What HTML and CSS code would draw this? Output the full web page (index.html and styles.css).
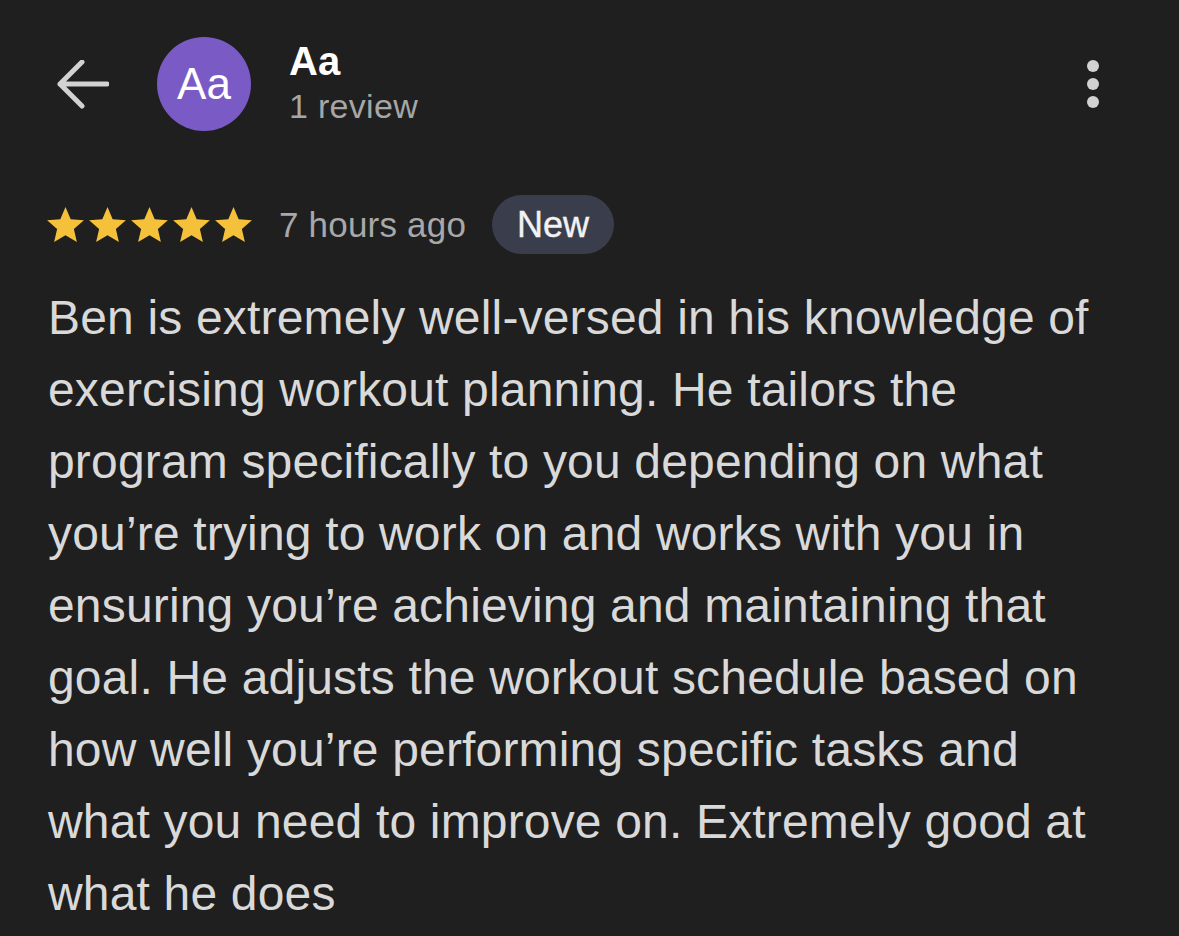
FILE: index.html
```html
<!DOCTYPE html>
<html lang="en">
<head>
<meta charset="utf-8">
<title>Review</title>
<link rel="stylesheet" href="styles.css">
</head>
<body>
<div class="page">
  <header class="header">
    <div class="back">
      <svg width="52" height="50" viewBox="0 0 52 50"><path d="M3 24 H50 M25 2 L3 24 L25 46" fill="none" stroke="#d2d2d2" stroke-width="5" stroke-linecap="round" stroke-linejoin="round"/></svg>
    </div>
    <div class="avatar">Aa</div>
    <div class="who">
      <div class="name">Aa</div>
      <div class="count">1 review</div>
    </div>
    <div class="menu">
      <svg width="14" height="50" viewBox="0 0 14 50"><circle cx="7" cy="7" r="6" fill="#d2d2d2"/><circle cx="7" cy="25" r="6" fill="#d2d2d2"/><circle cx="7" cy="43" r="6" fill="#d2d2d2"/></svg>
    </div>
  </header>

  <div class="meta">
    <div class="stars">
      <svg class="star" viewBox="2 2 20 19"><path d="M12 17.27L18.18 21l-1.64-7.03L22 9.24l-7.19-.61L12 2 9.19 8.63 2 9.24l5.46 4.730L5.82 21z"/></svg>
      <svg class="star" viewBox="2 2 20 19"><path d="M12 17.27L18.18 21l-1.64-7.03L22 9.24l-7.19-.61L12 2 9.19 8.63 2 9.24l5.46 4.73L5.82 21z"/></svg>
      <svg class="star" viewBox="2 2 20 19"><path d="M12 17.27L18.18 21l-1.64-7.03L22 9.24l-7.19-.61L12 2 9.19 8.63 2 9.24l5.46 4.73L5.82 21z"/></svg>
      <svg class="star" viewBox="2 2 20 19"><path d="M12 17.27L18.18 21l-1.64-7.03L22 9.24l-7.19-.61L12 2 9.19 8.63 2 9.24l5.46 4.73L5.82 21z"/></svg>
      <svg class="star" viewBox="2 2 20 19"><path d="M12 17.27L18.18 21l-1.64-7.03L22 9.24l-7.19-.61L12 2 9.19 8.63 2 9.24l5.46 4.73L5.82 21z"/></svg>
    </div>
    <span class="time">7 hours ago</span>
    <span class="badge">New</span>
  </div>

  <p class="review">Ben is extremely well-versed in his knowledge of exercising workout planning. He tailors the program specifically to you depending on what you’re trying to work on and works with you in ensuring you’re achieving and maintaining that goal. He adjusts the workout schedule based on how well you’re performing specific tasks and what you need to improve on. Extremely good at what he does</p>
</div>
</body>
</html>
```
FILE: styles.css
```css
html, body {
  margin: 0;
  padding: 0;
  background: #1f1f1f;
}
body {
  font-family: "Liberation Sans", Arial, sans-serif;
  color: #dadada;
}
.page {
  width: 1179px;
  height: 936px;
  overflow: hidden;
}
.header {
  display: flex;
  align-items: flex-start;
  padding: 37px 79px 0 57px;
  height: 94px;
}
.back {
  margin-top: 23px;
  width: 52px;
  height: 50px;
}
.back svg { display: block; }
.avatar {
  margin-left: 48px;
  width: 94px;
  height: 94px;
  border-radius: 50%;
  background: #7a5bc6;
  color: #ffffff;
  font-size: 44px;
  display: flex;
  align-items: center;
  justify-content: center;
}
.who {
  margin-left: 38px;
  margin-top: 2px;
}
.name {
  font-size: 40px;
  font-weight: bold;
  line-height: 44px;
  color: #ffffff;
}
.count {
  margin-top: 3px;
  font-size: 34px;
  line-height: 40px;
  color: #a6a6a6;
  letter-spacing: 0.3px;
}
.menu {
  margin-left: auto;
  margin-top: 22px;
}
.menu svg { display: block; }

.meta {
  display: flex;
  align-items: center;
  margin-top: 64px;
  padding-left: 47px;
  height: 59px;
}
.stars {
  display: flex;
  gap: 5px;
}
.star {
  display: block;
  width: 37px;
  height: 35px;
  fill: #f5c13b;
}
.time {
  margin-left: 27px;
  font-size: 35px;
  color: #a8a8a8;
  letter-spacing: 0.2px;
}
.badge {
  margin-left: 26px;
  height: 59px;
  padding: 0 25px;
  border-radius: 30px;
  background: #3a3e4c;
  color: #f2f2f2;
  font-size: 36px;
  display: flex;
  align-items: center;
  -webkit-text-stroke: 0.4px #f2f2f2;
}

.review {
  margin: 28px 0 0 0;
  padding: 0 72px 0 48px;
  font-size: 48px;
  line-height: 72px;
  color: #d9d9d9;
  letter-spacing: 0.17px;
}
```
